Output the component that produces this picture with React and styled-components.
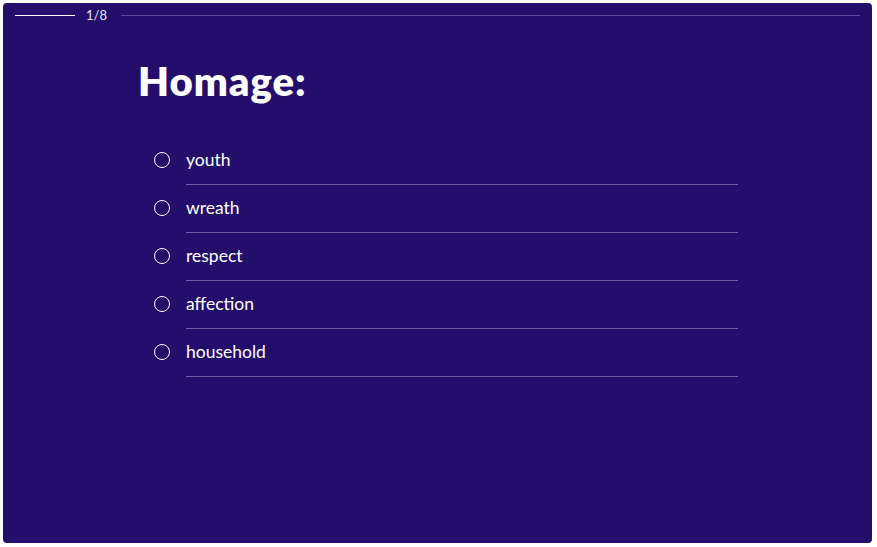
import styled, { createGlobalStyle } from "styled-components";

const Global = createGlobalStyle`
	html, body {
		margin: 0;
		background: #ffffff;
	}
	body {
		font-family: "Lato", "Noto Sans", sans-serif;
	}
`;

const Page = styled.div`
	padding: 3px 5px 4px 3px;
	height: 547px;
	box-sizing: border-box;
`;

const Card = styled.div`
	height: 100%;
	background-color: #230f6b;
	border-radius: 4px;
	color: white;
	display: flex;
	flex-direction: column;
	padding: 0 12px;
	box-sizing: border-box;
`;

const Progress = styled.div`
	display: flex;
	align-items: center;
	gap: 11px;
	height: 24px;
`;

const Line = styled.div`
	height: 1px;
	background-color: ${(p) => (p.$done ? "#ffffff" : "#5a4a9a")};
	width: ${(p) => (p.$done ? "60px" : "auto")};
	flex: ${(p) => (p.$done ? "none" : "1")};
`;

const Count = styled.span`
	font-size: 13px;
	color: #e8e4f5;
	padding-right: 3px;
`;

const Body = styled.div`
	padding: 30px 0 0 123px;
	width: 600px;
`;

const Title = styled.h1`
	margin: 0 0 32px;
	font-size: 40px;
	font-weight: 800;
	line-height: 48px;
	letter-spacing: 1px;
`;

const List = styled.ul`
	list-style: none;
	margin: 0;
	padding: 0 0 0 16px;
`;

const Option = styled.li`
	display: flex;
	align-items: flex-start;
	gap: 16px;
	height: 48px;
`;

const Radio = styled.span`
	width: 14px;
	height: 14px;
	border: 1.5px solid #ffffff;
	border-radius: 50%;
	margin-top: 15px;
	flex: none;
`;

const Label = styled.div`
	flex: 1;
	height: 48px;
	box-sizing: border-box;
	border-bottom: 1px solid #6b5ea6;
	font-size: 17.5px;
	line-height: 20px;
	padding-top: 13px;
	color: #ffffff;
`;

const options = ["youth", "wreath", "respect", "affection", "household"];

const App = () => {
	return (
		<Page>
			<Global />
			<Card>
				<Progress>
					<Line $done />
					<Count>1/8</Count>
					<Line />
				</Progress>
				<Body>
					<Title>Homage:</Title>
					<List>
						{options.map((o) => (
							<Option key={o}>
								<Radio />
								<Label>{o}</Label>
							</Option>
						))}
					</List>
				</Body>
			</Card>
		</Page>
	);
};

export default App;
